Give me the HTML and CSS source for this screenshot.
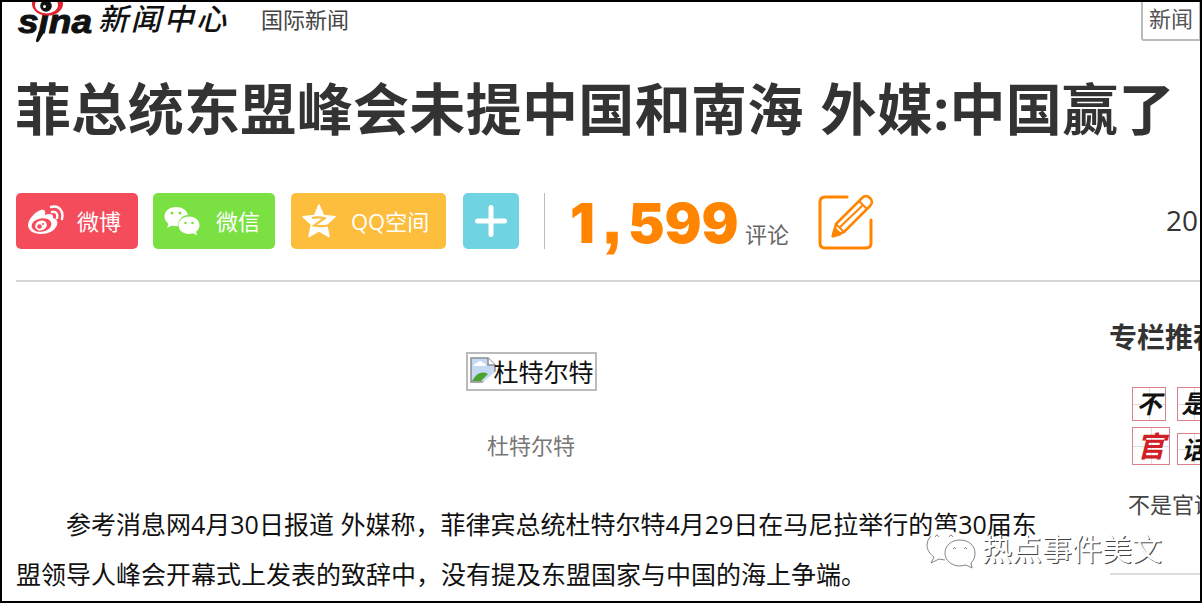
FILE: index.html
```html
<!DOCTYPE html>
<html lang="zh-CN">
<head>
  <meta charset="utf-8">
  <title>菲总统东盟峰会未提中国和南海 外媒:中国赢了</title>
  <link rel="stylesheet" href="styles.css">
</head>
<body>
  <div class="page">
    <header class="site-header">
      <svg class="logo" width="78" height="43" viewBox="0 0 78 43">
        <text class="logo-text" x="2" y="31" textLength="74" lengthAdjust="spacingAndGlyphs">sina</text>
        <path d="M23 29 L29 29 L23 39 Q20 42 20 38 Z" fill="#111"/>
        <ellipse cx="31.500" cy="2" rx="15.500" ry="11.500" fill="#e2232e"/>
        <ellipse cx="30.500" cy="3" rx="11.500" ry="8.500" fill="#fff"/>
        <circle cx="30" cy="4" r="5.800" fill="#111"/>
        <circle cx="28.500" cy="4.500" r="1.500" fill="#fff"/>
      </svg>
      <span class="site-name">新闻中心</span>
      <span class="channel">国际新闻</span>
      <div class="search-type">新闻</div>
    </header>

    <h1 class="title">菲总统东盟峰会未提中国和南海 外媒:中国赢了</h1>

    <div class="share-bar">
      <a class="share-btn weibo">
        <svg width="38" height="32" viewBox="0 0 38 32">
          <path fill="#fff" d="M14 5c3-1 5 1 4 5 5-2 9-1 8 3 4 1 5 4 4 7-2 6-9 9-16 9C6 29 1 25 1 20 1 14 9 6 14 5z"/>
          <ellipse cx="14.500" cy="20" rx="10" ry="6.700" fill="#f54c5c" transform="rotate(-10 14.500 20)"/>
          <ellipse cx="14" cy="20.500" rx="6" ry="4.800" fill="#fff" transform="rotate(-20 14 20.500)"/>
          <circle cx="12.500" cy="21.500" r="2.300" fill="#f54c5c"/>
          <circle cx="16" cy="19" r="1" fill="#f54c5c"/>
          <path d="M24 2c8-2 13 4 11 12M25 7c4-1 6 2 5 6" fill="none" stroke="#fff" stroke-width="2.400" stroke-linecap="round"/>
        </svg>
        <span>微博</span>
      </a>
      <a class="share-btn wechat">
        <svg width="36" height="30" viewBox="0 0 36 30">
          <path fill="#fff" d="M12 1C5.500 1 .500 5 .500 10.500c0 3 1.500 5.500 4 7.300L3 22l5-2.500c2 .6 4 .8 6 .5C14 13 19 9 24 9 23 4 18 1 12 1z"/>
          <path fill="#fff" d="M25 10.500c-6 0-10.500 3.800-10.500 8.700S19 28 25 28c1.500 0 3-.3 4-.7l4 2-1-3.500c2-1.600 3.500-4 3.500-6.600 0-4.900-4.500-8.700-10.500-8.700z"/>
          <circle cx="8" cy="7" r="1.500" fill="#7be143"/>
          <circle cx="16" cy="7" r="1.500" fill="#7be143"/>
          <circle cx="21.500" cy="17" r="1.300" fill="#7be143"/>
          <circle cx="28.500" cy="17" r="1.300" fill="#7be143"/>
        </svg>
        <span>微信</span>
      </a>
      <a class="share-btn qzone">
        <svg width="34" height="34" viewBox="0 0 34 34">
          <path fill="#fff" stroke="#fff" stroke-width="1.500" stroke-linejoin="round" d="M17 1l4.500 10.500L33 12.800l-8.500 7.700L27 32.500l-10-5.700-10 5.700 2.500-12L1 12.800l11.500-1.300z"/>
          <path d="M10 14q7-1.500 12.500.3L12 21.500q7 1.200 14 0" fill="none" stroke="#fdbe3d" stroke-width="2.200"/>
        </svg>
        <span>QQ空间</span>
      </a>
      <a class="share-btn more">
        <svg width="32" height="32" viewBox="0 0 32 32">
          <path d="M16 2.500v27M2.500 16h27" stroke="#fff" stroke-width="5" stroke-linecap="round"/>
        </svg>
      </a>
      <div class="comments">
        <span class="comment-count">1<span class="comma">,</span>599</span>
        <span class="comment-label">评论</span>
      </div>
      <svg class="edit-icon" width="57" height="57" viewBox="0 0 57 57" fill="none" stroke="#ff8500" stroke-width="3" stroke-linejoin="round">
        <path d="M30 4H8Q3 4 3 9V50Q3 55 8 55H49Q54 55 54 50V27" stroke-linecap="round"/>
        <path d="M16 43l3-12L45 5Q49 1 53 5T53 13L27 39z" stroke-width="2.500"/>
        <path d="M42 8l8 8M19 31l8 8M22 35L46 12" stroke-width="2"/>
        <path d="M16 43l2-7 5 5z" fill="#ff8500"/>
      </svg>
      <span class="date">2017年</span>
    </div>

    <div class="main">
      <article class="article">
        <div class="photo">
          <svg width="26" height="26" viewBox="0 0 26 26">
            <path d="M1 1h17l7 7v17H1z" fill="#c5d8f4" stroke="#8c8c8c" stroke-width="1.500"/>
            <path d="M4 9q0-3 3-3 3-4 6 0 3 0 3 3z" fill="#fff"/>
            <path d="M2 24q7-12 16-7l-7 7z" fill="#4ba32e"/>
            <path d="M12 26L26 14v12z" fill="#fff"/>
            <path d="M18 1v7h7" fill="#fff" stroke="#8c8c8c" stroke-width="1.500"/>
          </svg>
          <span>杜特尔特</span>
        </div>
        <div class="caption">杜特尔特</div>
        <p class="text">参考消息网4月30日报道 外媒称，菲律宾总统杜特尔特4月29日在马尼拉举行的第30届东<br>盟领导人峰会开幕式上发表的致辞中，没有提及东盟国家与中国的海上争端。</p>
      </article>

      <aside class="sidebar">
        <h2 class="sidebar-title">专栏推荐</h2>
        <div class="column-logo">
          <span class="tile">不</span>
          <span class="tile">是</span>
          <span class="tile red">官</span>
          <span class="tile short">话</span>
        </div>
        <div class="column-name">不是官话</div>
      </aside>
    </div>

    <div class="watermark">
      <svg width="50" height="42" viewBox="0 0 50 42" fill="#fff" stroke="#666" stroke-width=".8">
        <path d="M20 1C9 1 1 8 1 17c0 5 3 9 7 12l-3 6 8-4 7 1h12V8Q28 1 20 1z" stroke="none"/>
        <path d="M5 8Q1 12 1 17c0 5 3 9 7 12l-3 6 8-4 6 1" fill="none"/>
        <path d="M34 12c-9 0-15 6-15 13s6 13 15 13l6-1 6 3-1-5c3-3 4-6 4-10 0-7-6-13-15-13z"/>
        <path d="M9 9q2-4 4 0M23 9q2-4 4 0M27 21q2-3 3 0M38 21q2-3 3 0" fill="none"/>
      </svg>
      <span>热点事件美文</span>
    </div>
  </div>
</body>
</html>
```
FILE: styles.css
```css
* {
  box-sizing: border-box;
  margin: 0;
  padding: 0;
}

body {
  font-family: "Open Sans", "Noto Sans CJK SC", sans-serif;
  background: #fff;
  color: #111;
}

.page {
  position: relative;
  width: 1202px;
  height: 603px;
  padding-left: 14px;
  border: 2px solid #000;
  overflow: hidden;
  white-space: nowrap;
}

/* Header */
.site-header {
  display: flex;
  align-items: flex-start;
  height: 64px;
}

.logo {
  flex: none;
}

.logo-text {
  font-family: "Liberation Sans", sans-serif;
  font-size: 34px;
  font-weight: 700;
  font-style: italic;
  fill: #111;
  stroke: #111;
  stroke-width: 1px;
}

.site-name {
  margin-left: 4px;
  width: 163px;
  font-size: 30px;
  font-style: italic;
  font-weight: 500;
  letter-spacing: 2.7px;
  line-height: 33px;
}

.channel {
  font-size: 22px;
  line-height: 35px;
  color: #444;
}

.search-type {
  width: 60px;
  height: 39px;
  margin-left: auto;
  margin-right: -1px;
  padding-left: 6px;
  border: 2px solid #bbb;
  border-top: none;
  border-radius: 0 0 0 3px;
  font-size: 22px;
  line-height: 33px;
  color: #555;
}

.title {
  height: 84px;
  margin-left: -1px;
  font-size: 56px;
  font-weight: 700;
  line-height: 84px;
  letter-spacing: 0.33px;
  word-spacing: 2px;
  color: #333;
}

/* Share buttons and comment count */
.share-bar {
  display: flex;
  align-items: flex-start;
  height: 132px;
  padding-top: 43px;
  border-bottom: 2px solid #d5d5d5;
}

.share-btn {
  display: flex;
  align-items: center;
  flex: none;
  height: 56px;
  border-radius: 5px;
  font-size: 22px;
  color: #fff;
}

.share-btn span {
  padding-bottom: 2px;
}

.weibo {
  width: 122px;
  padding-left: 11px;
  gap: 12px;
  background: #f54c5c;
}

.wechat {
  width: 122px;
  margin-left: 15px;
  padding-left: 11px;
  gap: 16px;
  background: #7be143;
}

.qzone {
  width: 155px;
  margin-left: 16px;
  padding-left: 11px;
  gap: 15px;
  background: #fdbe3d;
}

.more {
  width: 56px;
  margin-left: 17px;
  justify-content: center;
  background: #70d3e2;
}

.comments {
  display: flex;
  align-items: baseline;
  height: 56px;
  margin-left: 25px;
  padding-left: 25px;
  border-left: 1px solid #bbb;
  line-height: 62px;
}

.comment-count {
  width: 175px;
  font-family: Inter, sans-serif;
  font-size: 55px;
  font-weight: 900;
  line-height: 60px;
  color: #ff8500;
}

.comma {
  display: inline-block;
  width: 33px;
  padding-left: 7px;
  font-family: "Liberation Sans", sans-serif;
  font-size: 72px;
  font-weight: 700;
  line-height: 40px;
  -webkit-text-stroke: 1px #ff8500;
}

.comment-label {
  width: 72px;
  font-size: 22px;
  color: #666;
}

.edit-icon {
  flex: none;
}

.date {
  margin-left: 292px;
  font-size: 28px;
  line-height: 55px;
  color: #333;
}

.main {
  display: flex;
}

/* Article */
.article {
  flex: none;
  width: 1030px;
  padding-top: 70px;
}

.photo {
  display: flex;
  align-items: center;
  width: 131px;
  height: 39px;
  margin: 0 auto;
  padding-left: 2px;
  border: 2px solid #bbb;
  font-size: 25px;
}

.photo svg {
  flex: none;
  margin: 0 -2px 4px 0;
}

.photo span {
  padding-bottom: 1px;
}

.caption {
  margin-top: 38px;
  font-size: 22px;
  line-height: 32px;
  text-align: center;
  color: #777;
}

.text {
  margin-top: 38px;
  font-size: 25px;
  line-height: 50px;
  text-indent: 50px;
}

/* Sidebar */
.sidebar {
  flex: none;
  width: 180px;
  height: 293px;
  margin-left: 64px;
  padding-top: 34px;
  border-bottom: 2px solid #ddd;
}

.sidebar-title {
  margin-left: -1px;
  font-size: 28px;
  line-height: 42px;
  color: #333;
}

.column-logo {
  display: grid;
  grid-template-columns: 38px 34px;
  gap: 6px 7px;
  margin: 29px 0 0 22px;
  align-items: end;
}

.tile {
  width: 34px;
  height: 34px;
  border: 1.5px solid #d9808a;
  background:
    linear-gradient(#ddd, #ddd) center / 100% 1px no-repeat,
    linear-gradient(#ddd, #ddd) center / 1px 100% no-repeat;
  font-size: 25px;
  font-weight: 700;
  font-style: italic;
  line-height: 31px;
  text-align: center;
}

.tile.red {
  width: 38px;
  height: 38px;
  line-height: 35px;
  font-size: 29px;
  color: #cf2027;
}

.tile.short {
  height: 32px;
}

.column-name {
  margin: 23px 0 0 18px;
  font-size: 22px;
  line-height: 32px;
  color: #444;
}

/* Account mark laid over the page corner */
.watermark {
  position: absolute;
  left: 924px;
  top: 525px;
  display: flex;
  align-items: center;
  gap: 6px;
  font-size: 30px;
  font-weight: 400;
  line-height: 44px;
  color: #fff;
  text-shadow: 1px 1px 0 #444;
}
```
